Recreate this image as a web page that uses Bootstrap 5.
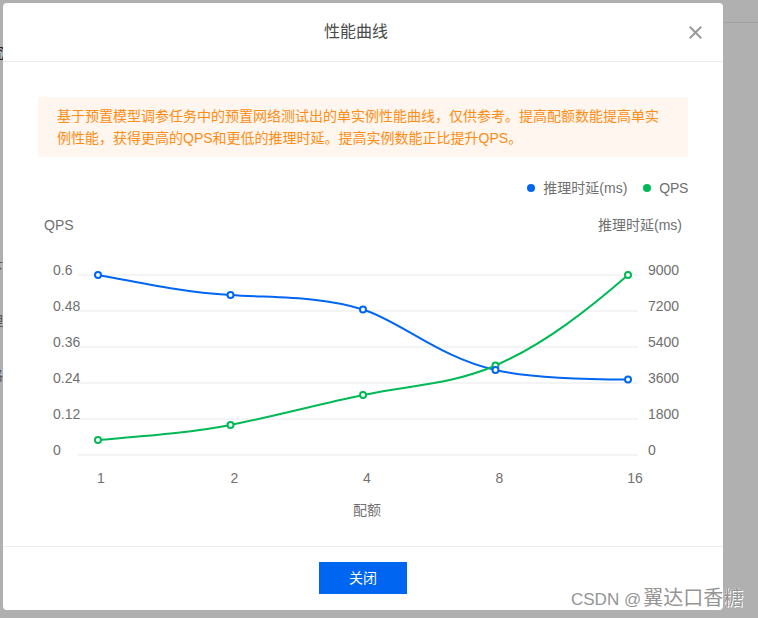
<!DOCTYPE html>
<html lang="zh-CN">
<head>
<meta charset="utf-8">
<title>性能曲线</title>
<link rel="stylesheet" href="https://cdn.jsdelivr.net/npm/bootstrap@5.3.0/dist/css/bootstrap.min.css">
<style>
html,body{height:618px;overflow:hidden}
body{background:#b0b0b0;font-family:"Liberation Sans","Noto Sans CJK SC",sans-serif;font-size:14px;color:#707070}
.stage{height:618px;position:relative}
.gutter{width:3px;overflow:hidden;flex:none;color:#555}
.gutter-in{width:14px;margin-left:-11px;padding-top:45px;line-height:16px}
.g1{color:#222;font-size:15px;height:215px}
.g2{height:53px}
.g3{height:54px}
.perf-modal{flex:none;width:720px;height:607px;margin-top:3px;border:0;border-radius:4px;background:#fff}
.perf-head{height:59px;padding:0 21px 0 20px;border-bottom:1px solid #eceded;border-radius:4px 4px 0 0}
.perf-title{font-size:16px;font-weight:400;color:#4a4a4a;line-height:1;text-align:center;margin:0}
.close-x{background:none;border:0;padding:0;width:13px;height:13px;line-height:0}
.perf-body{padding:35px 35px 0}
.perf-note{background:#fff6ef;color:#ff8c14;padding:8px 19px;line-height:22px;font-size:14px;border:0;border-radius:0;margin:0}
.legend-row{margin-top:22px;height:18px;line-height:18px;gap:16px}
.dot{width:8px;height:8px;border-radius:50%;margin-right:8px}
.dot-blue{background:#0066f2}
.dot-green{background:#00b956}
.qps-tight{letter-spacing:-.3px}
.chart{display:block;width:650px;height:325px;margin-top:8px}
.chart text{font-family:"Liberation Sans","Noto Sans CJK SC",sans-serif;font-size:14px;fill:#707070}
.perf-foot{height:64px;padding:15px 0 0;border-top:1px solid #eceded}
.perf-btn{width:88px;height:32px;padding:0;margin:0;background:#0066f2;border:0;border-radius:0;color:#fff;font-size:14px}
.side{flex:1 1 auto}
.side-line{margin-top:22px;border-top:1px solid #a2a2a2}
.mark-wm{position:absolute;left:571px;top:585px;font-size:20px;line-height:26px;color:#959595;text-shadow:0 0 1px #fff,1px 1px 0 #fff;white-space:nowrap}
.mark-latin{font-size:17px;margin-right:2px}
</style>
</head>
<body>
<div class="stage d-flex">
  <div class="gutter"><div class="gutter-in">
    <div class="g1">究</div>
    <div class="g2">下</div>
    <div class="g3">理</div>
    <div>格</div>
  </div></div>
  <div class="modal-content perf-modal">
    <div class="modal-header perf-head d-flex align-items-center">
      <h5 class="perf-title flex-grow-1">性能曲线</h5>
      <button class="close-x" type="button" aria-label="关闭">
        <svg width="13" height="13" viewBox="0 0 13 13"><path d="M.8.8 12.2 12.2M12.2.8.8 12.2" stroke="#999" stroke-width="2" fill="none"/></svg>
      </button>
    </div>
    <div class="modal-body perf-body">
      <div class="alert perf-note" role="alert">基于预置模型调参任务中的预置网络测试出的单实例性能曲线，仅供参考。提高配额数能提高单实例性能，获得更高的QPS和更低的推理时延。提高实例数能正比提升QPS。</div>
      <div class="legend-row d-flex justify-content-end align-items-center">
        <div class="d-flex align-items-center"><span class="dot dot-blue"></span>推理时延(ms)</div>
        <div class="d-flex align-items-center"><span class="dot dot-green"></span><span class="qps-tight">QPS</span></div>
      </div>
      <svg class="chart" viewBox="38 205 650 325">
        <g stroke="#f4f4f4" stroke-width="2">
          <path d="M78 275H638M78 311H638M78 347H638M78 383H638M78 419H638M78 455H638"/>
        </g>
        <text x="44" y="230">QPS</text>
        <text x="682" y="230" text-anchor="end">推理时延(ms)</text>
        <text x="53" y="275">0.6</text><text x="53" y="311">0.48</text><text x="53" y="347">0.36</text>
        <text x="53" y="383">0.24</text><text x="53" y="419">0.12</text><text x="53" y="455">0</text>
        <text x="648" y="275">9000</text><text x="648" y="311">7200</text><text x="648" y="347">5400</text>
        <text x="648" y="383">3600</text><text x="648" y="419">1800</text><text x="648" y="455">0</text>
        <g text-anchor="middle">
          <text x="101" y="483">1</text><text x="234.5" y="483">2</text><text x="367" y="483">4</text>
          <text x="499.5" y="483">8</text><text x="635" y="483">16</text>
          <text x="367" y="515">配额</text>
        </g>
        <path d="M98 275C145 284 190 293 230.5 295C275 298 320 296 363 309.5C400 321 440 358 495.5 370C535 379 590 379.5 628 379.5" fill="none" stroke="#0066f2" stroke-width="2"/>
        <path d="M98 440C145 436 190 433 230.5 425C275 416 320 404 363 395C410 385 450 385 495.5 365.5C545 344 590 308 628 275" fill="none" stroke="#00b956" stroke-width="2"/>
        <g fill="#fff" stroke="#00b956" stroke-width="2">
          <circle cx="98" cy="440" r="3"/><circle cx="230.5" cy="425" r="3"/><circle cx="363" cy="395" r="3"/><circle cx="495.5" cy="365.5" r="3"/><circle cx="628" cy="275" r="3"/>
        </g>
        <g fill="#fff" stroke="#0066f2" stroke-width="2">
          <circle cx="98" cy="275" r="3"/><circle cx="230.5" cy="295" r="3"/><circle cx="363" cy="309.5" r="3"/><circle cx="495.5" cy="370" r="3"/><circle cx="628" cy="379.5" r="3"/>
        </g>
      </svg>
    </div>
    <div class="modal-footer perf-foot d-flex justify-content-center align-items-start">
      <button class="btn btn-primary perf-btn" type="button">关闭</button>
    </div>
  </div>
  <div class="side"><div class="side-line"></div></div>
  <div class="mark-wm"><span class="mark-latin">CSDN @</span>翼达口香糖</div>
</div>
<script src="https://cdn.jsdelivr.net/npm/bootstrap@5.3.0/dist/js/bootstrap.bundle.min.js"></script>
</body>
</html>
